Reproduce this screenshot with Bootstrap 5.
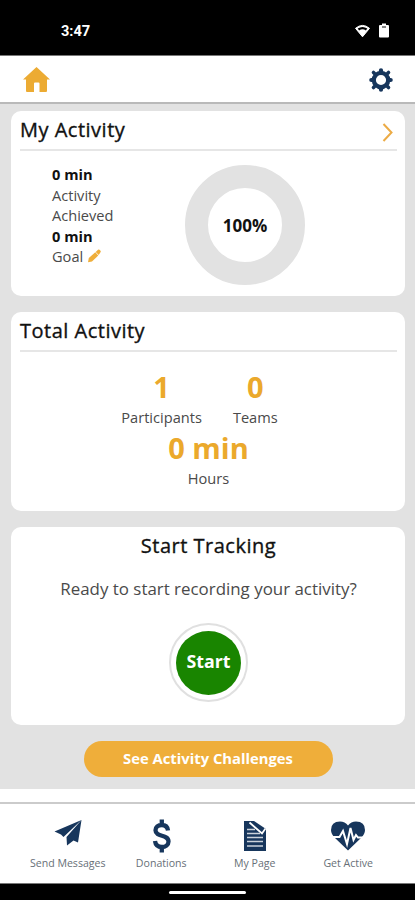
<!DOCTYPE html>
<html lang="en">
<head>
<meta charset="utf-8">
<meta name="viewport" content="width=device-width, initial-scale=1">
<title>My Activity</title>
<link href="https://cdn.jsdelivr.net/npm/bootstrap@5.3.0/dist/css/bootstrap.min.css" rel="stylesheet">
<style>
  body { font-family: "Open Sans", "Noto Sans", sans-serif; font-size: 14.6px; color: #4a4a4a; background: #fff; }
  svg { display: block; flex: none; }
  .app { height: 900px; overflow: hidden; }
  .status { height: 56px; background: #000; color: #fff; padding: 6px 26px 0 61px; border-bottom: 1px solid #777; }
  .clock { font: 700 14.6px/20px Roboto, sans-serif; }
  .topbar { height: 48px; padding: 1px 22px 0 23px; border-bottom: 2px solid #b9b9b9; }
  .feed { height: 685px; background: #e2e2e2; padding: 7px 10px 0 11px; gap: 16px; }
  .panel { border: 0; border-radius: 10px; padding: 0 8px 0 9px; }
  .panel-activity { height: 185px; }
  .panel-total { height: 199px; }
  .panel-track { height: 198px; }
  .panel-title { font-size: 20px; font-weight: 500; line-height: 29px; color: #111; margin: 0; letter-spacing: .5px; -webkit-text-stroke: .35px #111; }
  .panel-head { height: 40px; padding: 4px 4px 0 0; border-bottom: 2px solid #e6e6e6; }
  .facts { width: 80px; margin-left: 32px; padding-top: 13px; font-size: 14.6px; line-height: 20.5px; }
  .facts strong { color: #111; font-weight: 700; }
  .ring { width: 120px; height: 120px; border: 23px solid #e2e2e2; border-radius: 50%; margin: 14px 0 0 53px; padding-top: 2px; color: #111; font-size: 17px; }
  .stat { line-height: 22px; }
  .stat b { display: block; font-size: 29px; font-weight: 700; line-height: 38px; color: #eba92c; }
  .stat-pair { padding-right: 18px; gap: 31px; }
  .stat-hours { padding-top: 1px; }
  .ask { font-size: 16.9px; line-height: 24px; padding-top: 1px; }
  .start-btn { width: 79px; height: 79px; border: 2px solid #e0e0e0; border-radius: 50%; padding: 5px; background: #fff; margin-top: 22px; }
  .start-btn span { width: 65px; height: 64px; background: #198500; color: #fff; font-size: 17.8px; padding-bottom: 3px; }
  .see-btn { width: 249px; height: 36px; background: #efae3a; color: #fff; font-size: 14.8px; padding: 0 0 1px; border: 0; align-self: center; }
  .tabs { margin-top: 13px; height: 82px; border-top: 2px solid #cbcbcb; border-bottom: 1px solid #777; padding: 15px 20px 0 21px; }
  .tabs a { width: 25%; color: #687078; font-size: 10.6px; line-height: 16px; text-decoration: none; white-space: nowrap; }
  .tabs svg { height: 34px; margin-bottom: 2px; }
  .homebar { height: 16px; background: #000; padding-top: 7px; }
  .homebar span { width: 77px; height: 3px; background: #fff; }
</style>
<script src="https://cdn.jsdelivr.net/npm/bootstrap@5.3.0/dist/js/bootstrap.bundle.min.js"></script>
</head>
<body>
<div class="app d-flex flex-column">
  <div class="status d-flex align-items-center justify-content-between">
    <span class="clock">3:47</span>
    <span class="d-flex align-items-center gap-1">
      <svg width="17" height="14" viewBox="0 0 16 14"><path d="M1 4.300Q8-1.500 15 4.300L8 12.800Z" fill="#fff" stroke="#fff" stroke-linejoin="round"/><path d="M3.200 4.600Q8 1.200 12.800 4.600L11.400 6.400Q8 4.200 4.600 6.400Z" fill="#000"/></svg>
      <svg class="ms-1" width="10" height="15" viewBox="0 0 10 15"><path d="M3 .5h4v1.500h2q1 0 1 1v10.500q0 1-1 1H1q-1 0-1-1V3q0-1 1-1h2Z" fill="#fff"/><path d="M3 4h4" stroke="#444" stroke-width="1.300"/></svg>
    </span>
  </div>
  <header class="topbar d-flex align-items-center justify-content-between">
    <svg width="27" height="26" viewBox="0 0 27 26"><path d="M13.500 0 27 12.500H24V24q0 1-1 1H16.500V16.500q0-1-1-1H12q-1 0-1 1V25H4q-1 0-1-1V12.500H0Z" fill="#ecab33"/></svg>
    <svg width="24" height="24" viewBox="-12 -12 24 24" fill="none" stroke="#17365c"><circle r="7.200" stroke-width="4.200"/><g stroke-width="4.200" stroke-linecap="round"><path d="M0-9.700V-8M0 9.700V8M-9.700 0H-8M9.700 0H8"/><path stroke-width="3.600" d="M-7.500-7.500l1 1M7.500-7.500l-1 1M-7.500 7.500l1-1M7.500 7.500l-1-1"/></g></svg>
  </header>
  <main class="feed d-flex flex-column">
    <section class="card panel panel-activity">
      <div class="panel-head d-flex justify-content-between">
        <h2 class="panel-title">My Activity</h2>
        <svg class="mt-2" width="11" height="19" viewBox="0 0 11 19"><path d="M1.500 1 9.500 9.500 1.500 18" fill="none" stroke="#ecab45" stroke-width="2"/></svg>
      </div>
      <div class="d-flex">
        <div class="facts">
          <strong>0 min</strong><br>Activity<br>Achieved<br><strong>0 min</strong>
          <div class="d-flex align-items-center">Goal
            <svg class="ms-1" width="15" height="14" viewBox="0 0 15 14"><path d="M1 13.300 1.800 9 8.300 3.200 11.300 6.400 5 12.600Z" fill="#efae3a"/><path d="M8.700 2.900 11 .8q.8-.6 1.500 0l1 1q.7.8 0 1.500L11.700 6Z" fill="#efae3a"/></svg>
          </div>
        </div>
        <div class="ring d-flex align-items-center justify-content-center fw-bold">100%</div>
      </div>
    </section>
    <section class="card panel panel-total">
      <div class="panel-head"><h2 class="panel-title">Total Activity</h2></div>
      <div class="d-flex justify-content-center stat stat-pair text-center mt-3">
        <div><b>1</b>Participants</div>
        <div><b>0</b>Teams</div>
      </div>
      <div class="stat stat-hours text-center"><b>0 min</b>Hours</div>
    </section>
    <section class="card panel panel-track align-items-center pt-1">
      <h2 class="panel-title">Start Tracking</h2>
      <p class="ask mb-0 mt-3 text-nowrap">Ready to start recording your activity?</p>
      <button class="start-btn d-flex justify-content-center align-items-center" type="button"><span class="rounded-circle fw-bold d-flex align-items-center justify-content-center">Start</span></button>
    </section>
    <button class="btn see-btn rounded-pill fw-bold" type="button">See Activity Challenges</button>
  </main>
  <nav class="tabs d-flex">
    <a href="#" class="d-flex flex-column align-items-center"><svg width="28" height="34" viewBox="0 0 28 34" fill="#17365c"><path d="M.5 12.500 27.500 1 9.500 18 7 15.500Z"/><path d="M27.500 1 24 23.500 19.500 21.500 13 26.500 12.500 18Z"/></svg>Send Messages</a>
    <a href="#" class="d-flex flex-column align-items-center"><svg width="20" height="34" viewBox="0 0 20 34"><path d="M17 11.500C16.500 7.500 14 6 10.800 6 7 6 4.500 8 4.500 11.200 4.500 18.500 17.500 15 17.500 22.500 17.500 26 14.500 28 10.800 28 7 28 4.500 26 4 22M10.800 .5V6M10.800 28V33.500" fill="none" stroke="#17365c" stroke-width="4.300"/></svg>Donations</a>
    <a href="#" class="d-flex flex-column align-items-center"><svg width="22" height="34" viewBox="0 0 22 34"><path d="M0 2H10L22 10V32H0Z" fill="#17365c"/><path d="M3 10.500H11M3 14.500H16M3 18.500H19M3 22.500H19M3 27H19" stroke="#cbd2da" stroke-width="1.700"/><path d="M5.500 3.500 18 14.500 21.500 9.500" fill="none" stroke="#fff" stroke-width="1.800"/></svg>My Page</a>
    <a href="#" class="d-flex flex-column align-items-center"><svg width="34" height="34" viewBox="0 0 34 34"><path d="M17 31.500 4 19Q0 15 0 11 0 2.500 9 2.500 14 2.500 17 6.500 20 2.500 25 2.500 34 2.500 34 11 34 15 30 19Z" fill="#17365c"/><path d="M0 18H8.500L12 12 16 25 19.500 9 22.500 21 25 16 27 18.500H34" fill="none" stroke="#fff" stroke-width="2"/></svg>Get Active</a>
  </nav>
  <div class="homebar d-flex justify-content-center"><span class="rounded-pill"></span></div>
</div>
</body>
</html>
